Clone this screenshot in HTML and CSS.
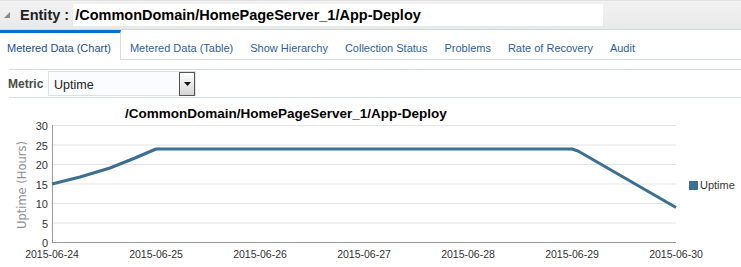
FILE: index.html
```html
<!DOCTYPE html>
<html>
<head>
<meta charset="utf-8">
<link rel="stylesheet" href="styles.css">
</head>
<body>
<div class="header">
  <svg class="disclose" width="10" height="10" viewBox="0 0 10 10"><polygon points="8,1 8,7 2,7" fill="#8a8a8a"/></svg>
  <span class="entity-label">Entity :</span>
  <span class="entity-path">/CommonDomain/HomePageServer_1/App-Deploy</span>
</div>
<div class="tabs">
  <div class="tab active">Metered Data (Chart)</div>
  <div class="tab">Metered Data (Table)</div>
  <div class="tab">Show Hierarchy</div>
  <div class="tab">Collection Status</div>
  <div class="tab">Problems</div>
  <div class="tab">Rate of Recovery</div>
  <div class="tab">Audit</div>
</div>
<div class="toolbar">
  <span class="metric-label">Metric</span>
  <div class="select">
    <span class="select-value">Uptime</span>
    <span class="select-btn"><svg width="7" height="4" viewBox="0 0 7 4"><polygon points="0,0 7,0 3.5,4" fill="#111"/></svg></span>
  </div>
</div>
<svg class="chart" width="741" height="168" viewBox="0 0 741 168">
  <text x="125" y="20" class="c-title">/CommonDomain/HomePageServer_1/App-Deploy</text>
  <g stroke="#e4e4e8" stroke-width="1">
    <line x1="52" y1="27.5" x2="676" y2="27.5"/>
    <line x1="52" y1="47" x2="676" y2="47"/>
    <line x1="52" y1="66.5" x2="676" y2="66.5"/>
    <line x1="52" y1="86" x2="676" y2="86"/>
    <line x1="52" y1="105.5" x2="676" y2="105.5"/>
    <line x1="52" y1="125" x2="676" y2="125"/>
  </g>
  <line x1="52.5" y1="27" x2="52.5" y2="144" stroke="#9a9a9a"/>
  <line x1="52" y1="144.5" x2="676" y2="144.5" stroke="#9a9a9a"/>
  <g class="c-ylab" text-anchor="end">
    <text x="48" y="32">30</text>
    <text x="48" y="51.5">25</text>
    <text x="48" y="71">20</text>
    <text x="48" y="90.5">15</text>
    <text x="48" y="110">10</text>
    <text x="48" y="129.5">5</text>
    <text x="48" y="149">0</text>
  </g>
  <text class="c-ytitle" transform="translate(26,87) rotate(-90)" text-anchor="middle">Uptime (Hours)</text>
  <g class="c-xlab" text-anchor="middle">
    <text x="52" y="160">2015-06-24</text>
    <text x="156" y="160">2015-06-25</text>
    <text x="260" y="160">2015-06-26</text>
    <text x="364" y="160">2015-06-27</text>
    <text x="468" y="160">2015-06-28</text>
    <text x="572" y="160">2015-06-29</text>
    <text x="676" y="160">2015-06-30</text>
  </g>
  <polyline points="52,86 80,79 110,70 135,60 156,51 572,51 578,53 676,109.5" fill="none" stroke="#3b6f93" stroke-width="3" stroke-linejoin="round"/>
  <rect x="689" y="83" width="9" height="9" fill="#3b6f93"/>
  <text x="700" y="91" class="c-legend">Uptime</text>
</svg>
</body>
</html>
```

FILE: styles.css
```css
html, body {
  margin: 0;
  padding: 0;
  background: #ffffff;
  font-family: "Liberation Sans", Arial, sans-serif;
}
.header {
  border-top: 1px solid #dfe2e5;
  border-bottom: 1px solid #d3d9df;
  background: linear-gradient(#f2f2f2, #e9e9e9);
  display: flex;
  align-items: center;
  box-sizing: border-box;
  height: 30px;
}
.disclose {
  margin-left: 2px;
  margin-top: 2px;
}
.entity-label {
  margin-left: 8px;
  font-weight: bold;
  font-size: 14.5px;
  color: #222;
}
.entity-path {
  margin-left: 4px;
  background: #ffffff;
  font-weight: bold;
  font-size: 14.5px;
  color: #000;
  width: 528px;
  padding: 3px 0 3px 2px;
}
.tabs {
  display: flex;
  height: 30px;
  box-sizing: border-box;
  border-bottom: 1px solid #d6dde4;
}
.tab {
  font-size: 11px;
  color: #2d5f9f;
  padding: 12px 8px 0 8px;
  margin-right: 1px;
}
.tab.active {
  color: #1b4e8e;
  border-top: 3px solid #0572ce;
  border-right: 1px solid #d6dde4;
  padding: 9px 9px 0 7px;
  margin-bottom: -1px;
  background: #fff;
}
.toolbar {
  margin: 9px 0 0 9px;
  border-top: 1px solid #d6dde4;
  border-bottom: 1px solid #d6dde4;
  height: 27px;
  display: flex;
  align-items: center;
}
.metric-label {
  font-size: 12px;
  font-weight: bold;
  color: #4a4a4a;
  margin-left: -1px;
  width: 40px;
}
.select {
  width: 148px;
  height: 25px;
  box-sizing: border-box;
  border: 1px solid #dde2e8;
  background: #fbfcfd;
  display: flex;
  align-items: center;
  justify-content: space-between;
}
.select-value {
  font-size: 12.5px;
  color: #222;
  margin-left: 5px;
  margin-top: 2px;
}
.select-btn {
  width: 14px;
  height: 22px;
  border: 1px solid #555;
  background: linear-gradient(#ffffff, #d4d4d4);
  display: flex;
  align-items: center;
  justify-content: center;
}
.chart {
  display: block;
}
.c-title {
  font-family: "Liberation Sans", Arial, sans-serif;
  font-weight: bold;
  font-size: 13.5px;
  fill: #000;
}
.c-ylab text, .c-xlab text {
  font-family: "Liberation Sans", Arial, sans-serif;
  font-size: 11px;
  fill: #333;
}
.c-xlab text {
  font-size: 10.5px;
}
.c-ytitle {
  font-family: "DejaVu Sans", Verdana, sans-serif;
  font-size: 11.5px;
  fill: #909090;
}
.c-legend {
  font-family: "Liberation Sans", Arial, sans-serif;
  font-size: 11px;
  fill: #333;
}
```
